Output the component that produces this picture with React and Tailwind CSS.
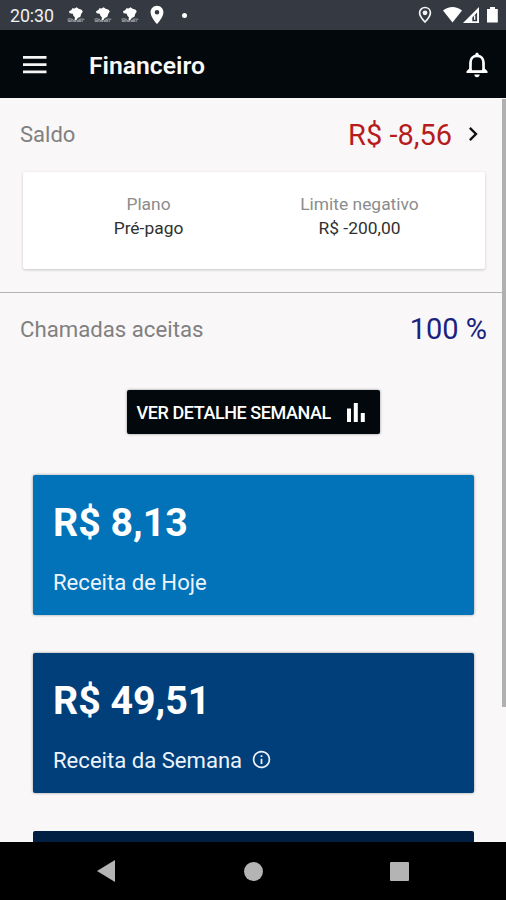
import { MdChevronRight, MdInfoOutline, MdLocationOn } from 'react-icons/md';

function MapBird() {
  return (
    <svg width="18" height="17" viewBox="0 0 18 17">
      <path d="M2 4.2 4.4 3 5.4 1.2 7.6 1.4 9.6.3l2 1.5 3 1 1.2 1.7-1.6 2.4-.8 2.8-2.6 1.4-1.8 2.4-1.6-1 .6-2-1.6-1.8-.6-2L2.6 6.2z" fill="#fff" />
      <path d="M.5 12.2l2.5-.4 3 .7M11.5 12.4l3-.4 2.8.3" stroke="#a5a8ac" strokeWidth="1" fill="none" />
      <path d="M.8 14h15" stroke="#a5a8ac" strokeWidth="1.4" strokeDasharray="4 .6" fill="none" />
    </svg>
  );
}

function StatusBar() {
  return (
    <div className="h-[30px] shrink-0 bg-[#353a42] text-white flex items-center justify-between pl-[10px] pr-[7px]">
      <div className="flex items-center">
        <span className="w-[57px] text-[17.8px] leading-[30px] pt-[2px] text-[#f0f0f0] tracking-[-0.1px]">20:30</span>
        <div className="flex gap-[9px]">
          <MapBird />
          <MapBird />
          <MapBird />
        </div>
        <MdLocationOn className="ml-[7px] w-[22px] h-[22px]" />
        <span className="ml-[14px] w-[5px] h-[5px] rounded-full bg-white" />
      </div>
      <div className="flex items-center">
        <svg className="mr-[11px]" width="14" height="18" viewBox="0 0 14 18">
          <path d="M7 1.5C3.9 1.5 1.6 3.8 1.6 6.8 1.6 10.6 7 16 7 16s5.4-5.4 5.4-9.2C12.4 3.8 10.1 1.5 7 1.5z" fill="none" stroke="#f4f4f4" strokeWidth="1.7" />
          <circle cx="7" cy="6.8" r="2.4" fill="#f4f4f4" />
        </svg>
        <svg width="56" height="18" viewBox="0 0 56 18" fill="#fff">
          <path d="M0 4.6C5.5-.2 13.5-.2 19 4.6L9.5 16.5z" />
          <path fillRule="evenodd" d="M20 17 36 1v16zM29.3 15.2h4.8V6.4l-4.8 5z" />
          <path d="M31 9.5h1.3v4.2H31z" />
          <path d="M47 1h5v2h2.8v13.6H44V3h3z" />
        </svg>
      </div>
    </div>
  );
}

function AppBar() {
  return (
    <header className="h-[68px] shrink-0 bg-[#02080b] flex items-center pl-[23px] pr-[18px]">
      <svg className="mt-px" width="24" height="18" viewBox="0 0 24 18" fill="#f5f5f5">
        <path d="M0 0h23.5v2.8H0zM0 7.2h23.5V10H0zM0 14.4h23.5v2.8H0z" />
      </svg>
      <h1 className="ml-[42px] mt-[3px] flex-1 text-[24.7px] font-semibold text-[#fafafa]">Financeiro</h1>
      <svg className="mt-[2px]" width="22" height="26" viewBox="0 0 22 26">
        <path d="M4.5 19.5V10.6C4.5 6.7 7.3 3.9 11 3.9s6.5 2.8 6.5 6.7v8.9" fill="none" stroke="#fff" strokeWidth="2.7" />
        <path d="M9.3 4V2.4C9.3 1.4 10 .7 11 .7s1.7.7 1.7 1.7V4zM.5 19.2l2.8-2.6h15.4l2.8 2.6v1.7H.5zM8.3 22.4h5.4c0 1.6-1.2 2.8-2.7 2.8s-2.7-1.2-2.7-2.8z" fill="#fff" />
        <path d="M5.9 14h10.2v4.2H5.9z" fill="#02080b" />
      </svg>
    </header>
  );
}

function PlanCard() {
  return (
    <div className="ml-[23px] mr-[21px] h-[97px] bg-white rounded-[2px] shadow-[0_1px_3px_rgba(0,0,0,0.2)] grid grid-cols-[251px_171px] pt-[20px] text-center text-[17.4px] leading-[24px]">
      <div>
        <p className="text-[#8c8c8c]">Plano</p>
        <p className="text-[#303030]">Pré-pago</p>
      </div>
      <div>
        <p className="text-[#8c8c8c]">Limite negativo</p>
        <p className="text-[#303030]">R$ -200,00</p>
      </div>
    </div>
  );
}

function RevenueCard({ value, label, info, className }) {
  return (
    <div className={`h-[140px] shrink-0 rounded-[2px] shadow-[0_0_3px_rgba(0,0,0,0.4)] pl-[20px] text-white ${className}`}>
      <p className="pt-[25px] text-[39.3px] leading-[47px] font-bold">{value}</p>
      <p className="mt-[21px] flex items-center text-[22.1px] leading-[28px] text-[#edf3fb]">
        {label}
        {info && <MdInfoOutline className="ml-[9px] -mt-[2px] w-[21px] h-[21px]" />}
      </p>
    </div>
  );
}

function NavigationBar() {
  return (
    <div className="h-[58px] shrink-0 bg-black grid grid-cols-[212px_83px_208px] items-center justify-items-center">
      <svg width="18" height="22" viewBox="0 0 18 22">
        <path d="M0 11 18 0v22z" fill="#b4b4b4" />
      </svg>
      <span className="w-[19px] h-[19px] rounded-full bg-[#b4b4b4]" />
      <span className="w-[19px] h-[19px] rounded-[1px] bg-[#b4b4b4]" />
    </div>
  );
}

export default function App() {
  return (
    <div className="w-[506px] h-[900px] flex flex-col overflow-hidden font-['Roboto',sans-serif] bg-[#f9f7f8]">
      <StatusBar />
      <AppBar />

      <div className="flex-1 min-h-0 relative overflow-hidden">
        {/* Balance */}
        <section className="h-[195px] border-b border-[#b5b5b5]">
          <div className="h-[74px] pl-[20px] pr-[19px] flex items-center">
            <span className="flex-1 -mt-[2px] text-[22px] text-[#808080]">Saldo</span>
            <span className="mt-px text-[29px] text-[#b71c1c]">R$ -8,56</span>
            <MdChevronRight className="ml-[7px] -mt-[3px] w-[28px] h-[28px] text-[#111]" />
          </div>
          <PlanCard />
        </section>

        {/* Accepted calls */}
        <div className="h-[72px] pl-[20px] pr-[19px] flex items-center justify-between">
          <span className="mt-px text-[22.2px] text-[#808080]">Chamadas aceitas</span>
          <span className="mt-[2px] text-[29px] text-[#1a237e]">100 %</span>
        </div>

        <button className="mt-[25px] mx-auto flex items-center w-[253px] h-[44px] pl-[10px] rounded-[2px] bg-[#02080b] text-white text-[18px] tracking-[-0.42px] font-medium shadow-[0_0_3px_rgba(0,0,0,0.4)]">
          VER DETALHE SEMANAL
          <svg className="ml-auto mr-[15px]" width="18" height="19" viewBox="0 0 18 19" fill="#fff">
            <path d="M0 5.5h4V19H0zM6.8 0h4v19h-4zM13.8 10h4v9h-4z" />
          </svg>
        </button>

        <div className="mt-[41px] pl-[33px] pr-[32px] flex flex-col gap-[38px]">
          <RevenueCard value="R$ 8,13" label="Receita de Hoje" className="bg-[#0273b9]" />
          <RevenueCard value="R$ 49,51" label="Receita da Semana" info className="bg-[#013f7b]" />
          <div className="h-[140px] rounded-[2px] bg-[#011f43]" />
        </div>

        {/* Scroll indicator */}
        <div className="absolute top-[1px] right-0 w-[4px] h-[608px] bg-[#b0b0b0]" />
      </div>

      <NavigationBar />
    </div>
  );
}
